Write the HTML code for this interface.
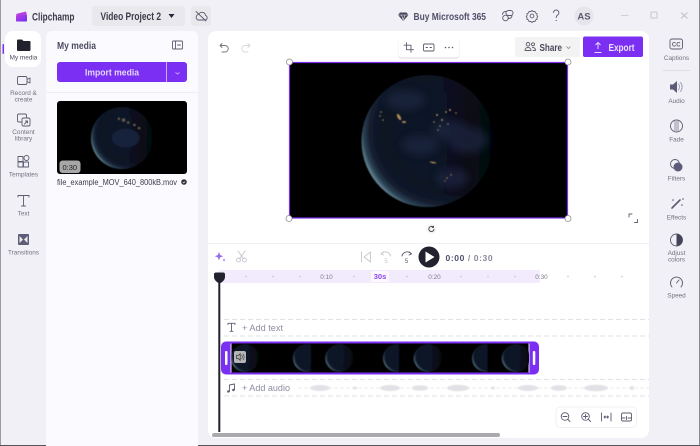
<!DOCTYPE html>
<html><head><meta charset="utf-8"><style>
html,body{margin:0;padding:0;width:700px;height:446px;overflow:hidden;background:#f1f0f6}
svg{display:block;font-family:"Liberation Sans",sans-serif;filter:blur(.3px)}
.l{font-size:6.4px;fill:#73727f;text-anchor:middle}
.i{fill:none;stroke:#5c5c6e;stroke-width:.9;stroke-linecap:round;stroke-linejoin:round}
.g{fill:none;stroke:#c6c6ce;stroke-width:.9;stroke-linecap:round;stroke-linejoin:round}
.t{font-size:6.4px;fill:#7d7d90;text-anchor:middle}
</style></head><body>
<svg width="700" height="446" viewBox="0 0 700 446" xmlns="http://www.w3.org/2000/svg">
<defs>
<radialGradient id="e" cx="0.62" cy="0.42" r="0.68">
<stop offset="0" stop-color="#0f1428"/><stop offset="0.7" stop-color="#0d1224"/><stop offset="0.82" stop-color="#131d2e"/><stop offset="0.89" stop-color="#2b4254"/><stop offset="0.94" stop-color="#668694"/><stop offset="1" stop-color="#a8bebc"/>
</radialGradient>
<linearGradient id="sh" x1="0" y1="0" x2="1" y2="0"><stop offset="0.6" stop-color="#000" stop-opacity="0"/><stop offset="1" stop-color="#000" stop-opacity=".7"/></linearGradient>
<filter id="b1" x="-20%" y="-50%" width="140%" height="200%"><feGaussianBlur stdDeviation="0.7"/></filter>
<filter id="b3" x="-10%" y="-10%" width="120%" height="120%"><feGaussianBlur stdDeviation=".45"/></filter>
<filter id="b4" x="-40%" y="-40%" width="180%" height="180%"><feGaussianBlur stdDeviation="4"/></filter>
<linearGradient id="logo" x1="0" y1="0" x2="1" y2="1"><stop offset="0" stop-color="#c13de0"/><stop offset="1" stop-color="#6a2ff0"/></linearGradient>
<g id="earth">
<circle r="1" fill="url(#e)"/>
<circle r="1" fill="url(#sh)"/>
</g>
<clipPath id="clipt"><rect x="231" y="343.500" width="298" height="29"/></clipPath>
<clipPath id="clipm"><rect x="57" y="101" width="130" height="73" rx="3"/></clipPath>
</defs>

<rect width="700" height="446" fill="#f1f0f6"/>
<rect x="0" y="0" width="1" height="446" fill="#9a9a9f"/>
<rect x="699" y="0" width="1" height="446" fill="#8a8a90"/>
<rect x="0" y="445" width="700" height="1" fill="#55555a"/>

<!-- title bar -->
<path d="M16 14l10-2.500 1 4H17z" fill="#b43ee0"/><rect x="16" y="15" width="11" height="6.500" rx=".8" fill="url(#logo)"/>
<text x="32" y="20.300" font-size="11" font-weight="700" fill="#3c3c4a" textLength="42.500" lengthAdjust="spacingAndGlyphs">Clipchamp</text>
<rect x="92" y="6" width="93" height="20" rx="3" fill="#e8e8ed"/>
<text x="100.500" y="20" font-size="11" font-weight="700" fill="#3c3c4a" textLength="60.500" lengthAdjust="spacingAndGlyphs">Video Project 2</text>
<path d="M168.500 14h6l-3 4z" fill="#24243a"/>
<rect x="191" y="6" width="20" height="20" rx="3" fill="#e8e8ed"/>
<path class="i" d="M198 20h7a2.300 2.300 0 0 0 .5-4.500 3.600 3.600 0 0 0-6.800-1.200A3 3 0 0 0 198 20ZM196 11.500l10 9.500"/>

<path d="M400 12.500h6.500l2 2.500-5.250 6-5.250-6z" fill="#44445a"/><path d="M398 15h10.500M401.500 15l1.750 5 1.750-5" stroke="#f1f0f6" stroke-width=".6" fill="none"/>
<text x="413.500" y="20" font-size="10.500" font-weight="700" fill="#50506a" textLength="72.500" lengthAdjust="spacingAndGlyphs">Buy Microsoft 365</text>
<g class="i"><circle cx="505.500" cy="18" r="2.800"/><rect x="506" y="10.500" width="7" height="5" rx="2.500"/><path d="M502.500 14.500a3 3 0 0 1 3-3h1M512 15.500a3 3 0 0 1-3 3h-1"/></g>
<path class="i" d="M532 10.500l1.200 1.100 1.700-.2.600 1.600 1.600.8-.2 1.700.9 1-.9 1 .2 1.700-1.600.8-.6 1.600-1.700-.2-1.200 1.100-1.200-1.100-1.700.2-.6-1.600-1.600-.8.2-1.700-.9-1 .9-1-.2-1.700 1.600-.8.6-1.600 1.700.2Z"/><circle class="i" cx="532" cy="16" r="1.900"/>
<path class="i" d="M553.500 12.500a2.700 2.700 0 1 1 4.100 2.500c-1 .7-1.400 1.200-1.400 2.500"/><circle cx="556.200" cy="20.500" r=".6" fill="#5c5c6e"/>
<circle cx="584" cy="16" r="9.500" fill="#e6e5ec"/>
<text x="584" y="19.500" font-size="9.500" font-weight="700" fill="#5c5c70" text-anchor="middle">AS</text>
<rect x="621" y="15" width="7.500" height="1" fill="#cfcfd4"/>
<rect x="651" y="12" width="6" height="6" rx=".8" fill="none" stroke="#c6c6cb"/>
<path d="M681 12.500l6.500 6M687.500 12.500l-6.500 6" stroke="#c0c0c6" fill="none"/>

<!-- left rail -->
<rect x="5" y="31" width="36" height="36" rx="8" fill="#fff"/>
<rect x="2.500" y="44" width="1.500" height="10" rx=".7" fill="#7b2ff7"/>
<path d="M17 40.500a1 1 0 0 1 1-1h4l1.500 1.500h6a1 1 0 0 1 1 1V50a1 1 0 0 1-1 1H18a1 1 0 0 1-1-1Z" fill="#22222e"/>
<text class="l" x="23.500" y="59.500" style="fill:#4c4c5e">My media</text>
<rect x="17.500" y="76.500" width="9.500" height="8" rx="1.500" class="i"/><path class="i" d="M27 79.500l3-1.500v5l-3-1.500"/>
<text class="l" x="23.500" y="95">Record &amp;</text><text class="l" x="23.500" y="101.500">create</text>
<g class="i"><rect x="17.500" y="114" width="9" height="8" rx="1.500"/><rect x="22" y="118" width="8" height="8" rx="1.500" fill="#f1f0f6"/><path d="M24.500 124l3-3M27.500 123v-2h-2"/></g>
<text class="l" x="23.500" y="134">Content</text><text class="l" x="23.500" y="140.500">library</text>
<g class="i"><rect x="18" y="156.500" width="5" height="5"/><rect x="18" y="162" width="5" height="5"/><rect x="23.500" y="162" width="5" height="5"/><circle cx="26.500" cy="158" r="2.500"/></g>
<text class="l" x="23.500" y="176.500">Templates</text>
<path d="M18 197v-1.500h11V197M23.500 195.500v10.500M21.500 206h4" class="i"/>
<text class="l" x="23.500" y="215.500">Text</text>
<rect x="18" y="234" width="11" height="11" rx="1" fill="#5d5d78"/><path d="M19.500 236l3.500 3.500-3.500 3.500zM27.500 236l-3.500 3.500 3.500 3.500z" fill="#eee"/>
<text class="l" x="23.500" y="254.500">Transitions</text>

<!-- media panel -->
<path d="M46 37a6 6 0 0 1 6-6h140a6 6 0 0 1 6 6V446H46Z" fill="#fafaff"/>
<text x="57" y="49" font-size="10" font-weight="700" fill="#4c4c60" textLength="39" lengthAdjust="spacingAndGlyphs">My media</text>
<rect x="172.500" y="41" width="10" height="8" rx="1" class="i"/><path d="M175.500 41v8M177.500 45h3" class="i"/>
<rect x="57" y="62" width="130" height="20" rx="3" fill="#7a2ff2"/>
<rect x="166" y="62" width="1" height="20" fill="#c9a9f8"/>
<text x="85" y="75.500" font-size="9.500" font-weight="700" fill="#e6d8fd" textLength="54" lengthAdjust="spacingAndGlyphs">Import media</text>
<path d="M175.500 72.500l2 1.500 2-1.500" fill="none" stroke="#cdb2fa" stroke-width=".8"/>
<rect x="46" y="92" width="153" height="1" fill="#eeeef3"/>
<rect x="57" y="101" width="130" height="73" rx="3" fill="#000"/>
<g clip-path="url(#clipm)"><g filter="url(#b3)"><g transform="translate(122 138) scale(31)"><use href="#earth"/>
<ellipse cx=".12" cy="0" rx=".45" ry=".3" fill="#1c2540" opacity=".8"/>
<g fill="#7d725c" opacity=".8"><circle cx="-.1" cy="-.62" r=".035"/><circle cx=".05" cy="-.58" r=".05"/><circle cx=".2" cy="-.5" r=".035"/><circle cx=".4" cy="-.42" r=".035"/><circle cx=".55" cy="-.32" r=".035"/></g>
</g></g></g>
<rect x="59.500" y="160.500" width="21" height="12.500" rx="3" fill="#a7a7a7"/>
<text x="69.800" y="170" font-size="7.500" fill="#222" text-anchor="middle">0:30</text>
<text x="57" y="185" font-size="7.900" fill="#3c3c4a" textLength="120" lengthAdjust="spacingAndGlyphs">file_example_MOV_640_800kB.mov</text>
<circle cx="184" cy="182" r="2.800" fill="#33333f"/><path d="M182.800 182l.9.9 1.500-1.500" stroke="#fff" stroke-width=".6" fill="none"/>

<!-- main panel -->
<rect x="208" y="31" width="441" height="407" rx="8" fill="#fff"/>
<path class="i" style="stroke:#74747f" d="M222 43.500l-2 2 2 2M220 45.500h5a3 3 0 0 1 0 6.500h-3"/>
<path class="g" style="stroke:#d8d8dd" d="M248 43.500l2 2-2 2M250 45.500h-5a3 3 0 0 0 0 6.500h3"/>

<!-- floating toolbar -->
<rect x="398.500" y="38" width="60.500" height="20.500" rx="3" fill="#000" opacity=".16" filter="url(#b1)"/>
<rect x="398.500" y="37" width="60.500" height="20.500" rx="3" fill="#fff"/>
<path class="i" d="M406.500 42.700v7h7M404 45.200h7v7"/>
<rect x="423.500" y="44" width="10.500" height="7" rx="1.300" class="i"/><path class="i" d="M426 47.500h1.500M430 47.500h1.500"/>
<g fill="#5c5c6e"><circle cx="445.500" cy="47.500" r=".8"/><circle cx="449" cy="47.500" r=".8"/><circle cx="452.500" cy="47.500" r=".8"/></g>

<rect x="515" y="37" width="65" height="20" rx="2" fill="#f3f3f4"/>
<g class="i"><circle cx="528" cy="44.300" r="1.800"/><circle cx="533" cy="44.300" r="1.500"/><path d="M525 50.500c0-4 6-4 6 0ZM532.500 47.500c2 0 3 1 3 3h-2.500"/></g>
<text x="539.500" y="51" font-size="10" font-weight="700" fill="#4a4a5c" textLength="22.500" lengthAdjust="spacingAndGlyphs">Share</text>
<path d="M566.500 46.500l2 2 2-2" fill="none" stroke="#8a8a9a" stroke-width=".8"/>
<rect x="583" y="36.500" width="60" height="20.500" rx="2" fill="#7a2ff2"/>
<path d="M598 49v-6M595.500 45l2.500-2.500 2.500 2.500M594.500 52.500h7" fill="none" stroke="#e6d8fd" stroke-width="1"/>
<text x="608.500" y="51" font-size="10" font-weight="700" fill="#ece2fe" textLength="26" lengthAdjust="spacingAndGlyphs">Export</text>

<!-- preview -->
<rect x="289.500" y="62.500" width="278" height="155.500" fill="#000" stroke="#7a2ff2" stroke-width="1.200"/>
<g filter="url(#b3)"><g transform="translate(427.500 141) scale(66)"><use href="#earth"/></g></g>
<g filter="url(#b4)" fill="#1d2542" opacity=".7"><ellipse cx="468" cy="140" rx="20" ry="13"/><ellipse cx="450" cy="130" rx="18" ry="10"/><ellipse cx="452" cy="178" rx="16" ry="10"/><ellipse cx="405" cy="100" rx="20" ry="10"/><ellipse cx="420" cy="145" rx="18" ry="10"/></g>
<g filter="url(#b3)" fill="#b08a54">
<ellipse cx="399" cy="117" rx="1.500" ry="3.500" transform="rotate(-30 399 117)"/><ellipse cx="404" cy="122" rx="2" ry="1"/><circle cx="381" cy="112" r=".8"/><circle cx="383" cy="120" r=".8"/><circle cx="380" cy="116" r=".7"/>
<circle cx="437" cy="115" r="1"/><circle cx="442" cy="120" r="1"/><circle cx="434" cy="122" r=".8"/><circle cx="440" cy="126" r=".8"/><circle cx="446" cy="112" r=".9"/><circle cx="450" cy="110" r="1"/><circle cx="456" cy="113" r=".8"/><circle cx="448" cy="124" r=".8"/><circle cx="438" cy="130" r=".7"/>
<ellipse cx="433" cy="162.500" rx="3.500" ry=".7" transform="rotate(10 433 162.500)"/>
<circle cx="447" cy="178" r=".8"/><circle cx="451" cy="175" r=".7"/><circle cx="445" cy="181" r=".6"/>
</g>
<g fill="#fff" stroke="#8c8c92" stroke-width=".8"><circle cx="289.500" cy="62" r="3"/><circle cx="568" cy="62" r="3"/><circle cx="289" cy="218.500" r="3"/><circle cx="568" cy="218.500" r="3"/></g>
<circle cx="431.500" cy="229" r="5" fill="#f4f4f6"/><path d="M434 229a2.600 2.600 0 1 1-.8-1.900M433.500 225.800v1.600h-1.600" fill="none" stroke="#444" stroke-width=".9"/>
<path class="i" d="M629 217v-3h3M634.500 222.500h3v-3"/>
<rect x="208" y="243" width="441" height="1" fill="#f1f0f5"/>

<!-- transport -->
<path d="M219 252l1.200 3 3 1.200-3 1.200-1.200 3-1.200-3-3-1.200 3-1.200z" fill="#9a6cf2"/><circle cx="224" cy="260" r="1.200" fill="#c0a0f8"/>
<g class="g"><path d="M238 251l5.500 8M245 251l-5.500 8"/><circle cx="238.500" cy="260" r="2"/><circle cx="244.500" cy="260" r="2"/></g>
<path class="g" d="M361.500 252v10M370.500 252l-6.500 5 6.500 5z"/>
<path class="g" d="M381 254l2-2M381 254l2.500 1M381.500 254a5 5 0 0 1 9 2"/><text x="386" y="263" font-size="6" fill="#c6c6ce" text-anchor="middle">5</text>
<path class="i" d="M411.500 254l-2-2M411.500 254l-2.500 1M411 254a5 5 0 0 0-9 2"/><text x="406.500" y="263" font-size="6" fill="#5c5c6e" text-anchor="middle">5</text>
<circle cx="429" cy="257" r="10.500" fill="#22222e"/><path d="M425.500 251.500l9 5.500-9 5.500z" fill="#fff"/>
<text x="445.500" y="261" font-size="8.500" font-weight="700" letter-spacing=".6" fill="#50506a">0:00 <tspan fill="#8a8a9c">/ 0:30</tspan></text>

<!-- ruler -->
<rect x="219" y="270" width="321" height="13" rx="2" fill="#f2eafd"/>
<g fill="#cfcbd9"><circle cx="246" cy="276.500" r=".9"/><circle cx="273" cy="276.500" r=".9"/><circle cx="300" cy="276.500" r=".9"/><circle cx="354" cy="276.500" r=".9"/><circle cx="407" cy="276.500" r=".9"/><circle cx="461" cy="276.500" r=".9"/><circle cx="488" cy="276.500" r=".9"/><circle cx="515" cy="276.500" r=".9"/><circle cx="568" cy="276.500" r=".9"/><circle cx="595" cy="276.500" r=".9"/><circle cx="622" cy="276.500" r=".9"/></g>
<text class="t" x="326.500" y="279">0:10</text>
<rect x="371" y="271" width="18" height="11" rx="2" fill="#fbf8ff"/>
<text x="380" y="279" font-size="7.500" font-weight="700" fill="#8a44f2" text-anchor="middle">30s</text>
<text class="t" x="434.500" y="279">0:20</text>
<text class="t" x="541.500" y="279">0:30</text>

<!-- dashed tracks -->
<g stroke="#e0e0e6" stroke-dasharray="5 3" fill="none"><path d="M224 319.500H649M224 336H649M224 379.500H649M224 396H649"/></g>
<path class="i" d="M228 324.500v-1.200h7v1.200M231.500 323.300v8M230 331.300h3"/>
<text x="242" y="331" font-size="9.500" fill="#8d8da2" textLength="41" lengthAdjust="spacingAndGlyphs">+ Add text</text>

<!-- clip -->
<rect x="221" y="341.500" width="318" height="33" rx="5" fill="#7a2ff2"/>
<rect x="231" y="343.500" width="298" height="29" fill="#000"/>
<rect x="230.500" y="343.500" width="1" height="29" fill="#e8dcff"/><rect x="528.500" y="343.500" width="1" height="29" fill="#e8dcff"/>
<rect x="225" y="351" width="2.500" height="14" rx="1" fill="#fff"/><rect x="532.800" y="351" width="2.500" height="14" rx="1" fill="#fff"/>
<g clip-path="url(#clipt)"><g filter="url(#b3)">
<g transform="translate(245 358) scale(14)"><use href="#earth"/></g>
<g transform="translate(307 358) scale(14)"><use href="#earth"/></g><rect x="311" y="343.500" width="15" height="29" fill="#000"/>
<g transform="translate(339.500 358) scale(14)"><use href="#earth"/></g>
<g transform="translate(397 358) scale(14)"><use href="#earth"/></g><rect x="399" y="343.500" width="15" height="29" fill="#000"/>
<g transform="translate(428 358) scale(14)"><use href="#earth"/></g>
<g transform="translate(486 358) scale(14)"><use href="#earth"/></g><rect x="487.500" y="343.500" width="15" height="29" fill="#000"/>
<g transform="translate(516 358) scale(14)"><use href="#earth"/></g>
</g></g>
<rect x="234" y="351" width="12" height="12" rx="2" fill="#b5b5b8"/>
<path d="M236.500 355.500h1.700l2-1.800v6.600l-2-1.800h-1.700z" fill="none" stroke="#333" stroke-width=".7"/><path d="M241.500 355a3 3 0 0 1 0 4M243 354a4.500 4.500 0 0 1 0 6" fill="none" stroke="#333" stroke-width=".6"/>

<!-- audio track -->
<path class="i" d="M229.500 391.500v-6.500l5-1v6"/><circle cx="228.300" cy="391.500" r="1.200" fill="#5c5c6e"/><circle cx="233.300" cy="390" r="1.200" fill="#5c5c6e"/>
<text x="242" y="391" font-size="9.500" fill="#8d8da2" textLength="48" lengthAdjust="spacingAndGlyphs">+ Add audio</text>
<path d="M298 388H649" stroke="#ececef" stroke-dasharray="4 2"/>
<g fill="#e2e2e6" filter="url(#b3)">
<ellipse cx="320" cy="388" rx="10" ry="3"/><ellipse cx="355" cy="388" rx="2" ry="1.500"/><ellipse cx="390" cy="388" rx="10" ry="3"/><ellipse cx="420" cy="388" rx="8" ry="2.800"/><ellipse cx="458" cy="388" rx="11" ry="3.200"/><ellipse cx="493" cy="388" rx="2" ry="1.500"/><ellipse cx="528" cy="388" rx="10" ry="3"/><ellipse cx="559" cy="388" rx="8" ry="2.800"/><ellipse cx="596" cy="388" rx="12" ry="3.200"/><ellipse cx="632" cy="388" rx="2" ry="2"/>
</g>

<!-- playhead -->
<rect x="218.300" y="278" width="2" height="154" fill="#22222e"/>
<path d="M214 274.500a2 2 0 0 1 2-2h7a2 2 0 0 1 2 2v2.500c0 3-3 5.500-5.500 6.500-2.500-1-5.500-3.500-5.500-6.500Z" fill="#22222e"/>

<!-- scrollbar -->
<rect x="212" y="433" width="288" height="4" rx="2" fill="#a9a9ae"/>

<!-- zoom bar -->
<rect x="556" y="407" width="80.500" height="20.500" rx="4" fill="#fff" stroke="#f1f1f4"/>
<g class="i"><circle cx="565" cy="416.500" r="3.800"/><path d="M563 416.500h4M568 419.500l2 2"/><circle cx="585.500" cy="416.500" r="3.800"/><path d="M583.500 416.500h4M585.500 414.500v4M588.500 419.500l2 2"/><path d="M601.500 413v8M611 413v8M604 417h4.500M604 417l1 -1M604 417l1 1M608.500 417l-1-1M608.500 417l-1 1"/><rect x="621.500" y="413" width="10" height="8" rx="1.500"/><path d="M621.500 418h3.500M628 418h3.500M626.500 416.500v3"/></g>

<!-- right rail -->
<rect x="670" y="39" width="12.500" height="10" rx="2" class="i"/><text x="676.200" y="46.300" font-size="6" fill="#5c5c6e" text-anchor="middle" font-weight="700">CC</text>
<text class="l" x="676.500" y="60">Captions</text>
<rect x="663" y="70" width="27" height="1" fill="#dddde3"/>
<path d="M670 84.500h3l4-3.500v12l-4-3.500h-3z" fill="#5c5c78"/><path d="M678.500 84a5 5 0 0 1 0 6M680.500 82.500a7 7 0 0 1 0 9" class="i" style="stroke:#9a9aac"/>
<text class="l" x="676.500" y="103">Audio</text>
<circle cx="676.500" cy="126" r="6" class="i"/><rect x="674" y="121" width="5" height="10" fill="#c0c0ce"/><text class="l" x="676.500" y="141.500">Fade</text>
<circle cx="675" cy="164" r="4.500" class="i"/><circle cx="678" cy="167" r="4.500" fill="#5c5c78"/><text class="l" x="676.500" y="180.500">Filters</text>
<path d="M672 208l8-8" stroke="#5c5c6e" stroke-width="1.600" stroke-linecap="round"/><g fill="#5c5c6e"><circle cx="673" cy="200" r=".8"/><circle cx="682" cy="205" r=".8"/><circle cx="683" cy="199" r=".8"/></g><text class="l" x="676.500" y="219.500">Effects</text>
<circle cx="676.500" cy="240" r="6" class="i"/><path d="M676.500 234a6 6 0 0 1 0 12z" fill="#45455a"/><text class="l" x="676.500" y="255">Adjust</text><text class="l" x="676.500" y="261.500">colors</text>
<path class="i" d="M672 287a6 6 0 1 1 9 0M676.500 283l2.500-3"/><text class="l" x="676.500" y="297.500">Speed</text>
</svg>
</body></html>
